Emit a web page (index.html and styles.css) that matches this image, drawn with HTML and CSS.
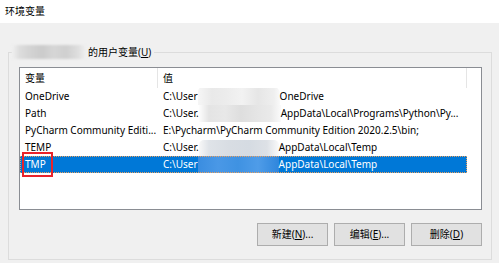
FILE: index.html
```html
<!DOCTYPE html>
<html lang="zh">
<head>
<meta charset="utf-8">
<link rel="stylesheet" href="styles.css">
</head>
<body>
<div class="window">
  <div class="titlebar">环境变量</div>
  <div class="group">
    <div class="legend"><span class="blur-name"></span><span class="legend-text">的用户变量(<u>U</u>)</span></div>
    <div class="list">
      <div class="row header">
        <div class="c1">变量</div>
        <div class="c2">值</div>
      </div>
      <div class="row">
        <div class="c1">OneDrive</div>
        <div class="c2">C:\User<span class="blur b1"></span>OneDrive</div>
      </div>
      <div class="row">
        <div class="c1">Path</div>
        <div class="c2">C:\User.<span class="blur b2"></span>AppData\Local\Programs\Python\Py...</div>
      </div>
      <div class="row">
        <div class="c1">PyCharm Community Editi...</div>
        <div class="c2">E:\Pycharm\PyCharm Community Edition 2020.2.5\bin;</div>
      </div>
      <div class="row">
        <div class="c1">TEMP</div>
        <div class="c2">C:\User.<span class="blur b3"></span>AppData\Local\Temp</div>
      </div>
      <div class="row selected">
        <div class="c1">TMP</div>
        <div class="c2">C:\User<span class="blur b4"></span>AppData\Local\Temp</div>
      </div>
      <div class="redbox"></div>
    </div>
    <div class="buttons">
      <div class="btn">新建(<u>N</u>)...</div>
      <div class="btn">编辑(<u>E</u>)...</div>
      <div class="btn">删除(<u>D</u>)</div>
    </div>
  </div>
</div>
</body>
</html>
```
FILE: styles.css
```css
html, body {
  margin: 0;
  padding: 0;
}
body {
  width: 499px;
  height: 263px;
  overflow: hidden;
  background: #f0f0f0;
  font-family: "Noto Sans", "Noto Sans CJK SC", sans-serif;
  font-size: 10px;
  color: #000;
}
.window {
  width: 499px;
  height: 263px;
}
.titlebar {
  height: 23px;
  background: #fff;
  line-height: 23px;
  padding-left: 5px;
  font-size: 10px;
}
.group {
  margin: 29px 0 0 8px;
  width: 484px;
  height: 208px;
  box-sizing: border-box;
  border: 1px solid #dcdcdc;
  padding: 0 9px 0 10px;
}
.legend {
  display: flex;
  align-items: center;
  width: max-content;
  height: 16px;
  margin: -9px 0 0 -7px;
  padding-right: 3px;
  background: #f0f0f0;
}
.blur-name {
  display: inline-block;
  width: 74px;
  height: 14px;
  margin-right: 2px;
  background: linear-gradient(to right, #f0f0f0 0, #dcdcdc 8px, #d3d3d3 18px, #cbcbcb 30px, #d6d6d6 42px, #cfcfcf 54px, #dedede 66px, #f0f0f0 74px);
  filter: blur(0.8px);
  border-radius: 3px;
}
.legend-text {
  line-height: 16px;
}
.list {
  position: relative;
  margin-top: 7px;
  height: 143px;
  box-sizing: border-box;
  border: 1px solid #8a8d93;
  background: #fff;
}
.row {
  display: flex;
  width: 447px;
  height: 17px;
  line-height: 17px;
  white-space: nowrap;
}
.row.header {
  height: 20px;
  line-height: 20px;
}
.c1 {
  width: 137px;
  box-sizing: border-box;
  padding-left: 5px;
  overflow: hidden;
}
.c2 {
  width: 310px;
  box-sizing: border-box;
  padding-left: 6px;
  overflow: hidden;
  display: flex;
  align-items: center;
}
.header .c2 {
  border-left: 1px solid #e5e5e5;
  border-right: 1px solid #e5e5e5;
  padding-left: 5px;
}
.selected {
  background: #0078d7;
  color: #fff;
  outline: 1px dotted #e8a060;
  outline-offset: -1px;
}
.blur {
  display: inline-block;
  height: 17px;
  flex: none;
}
.b1 {
  width: 82px;
  margin-top: -2px;
  height: 19px;
  background: linear-gradient(to right, #f6f6f6 0, #e9e9e9 14px, #ececec 28px, #f2f2f2 44px, #e6e6e6 60px, #efefef 76px, #fafafa 82px);
  border-radius: 6px 8px 0 0;
}
.b2 {
  width: 82px;
  background: linear-gradient(to right, #fdfdfd 0, #e4e4e4 10px, #e8e8e8 26px, #dedede 42px, #e5e5e5 58px, #eaeaea 72px, #fbfbfb 82px);
}
.b3 {
  width: 80px;
  margin-top: 1px;
  background: linear-gradient(to right, #f8f8f8 0, #dfe3e8 10px, #d8dde3 30px, #d5dbe2 50px, #dde1e6 68px, #fafafa 80px);
  border-radius: 5px 5px 0 0;
}
.b4 {
  width: 81px;
  background: linear-gradient(to right, #3a8de0 0, #4a98e6 20px, #3f92e2 40px, #4f9ce8 60px, #2f86dc 81px);
}
.redbox {
  position: absolute;
  left: 2px;
  top: 84px;
  width: 31px;
  height: 25px;
  box-sizing: border-box;
  border: 2px solid #e8232b;
}
.buttons {
  display: flex;
  justify-content: flex-end;
  gap: 6px;
  margin-top: 13px;
}
.btn {
  width: 71px;
  height: 23px;
  box-sizing: border-box;
  border: 1px solid #adadad;
  background: #e1e1e1;
  text-align: center;
  line-height: 21px;
  font-size: 10px;
}
u {
  text-decoration: underline;
  text-underline-offset: 1px;
}
```
